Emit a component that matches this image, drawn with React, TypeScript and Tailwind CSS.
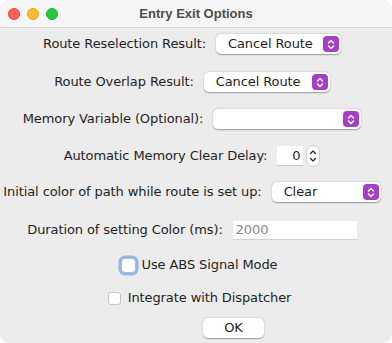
import React from "react";

const font = { fontFamily: '"Lucida Grande", "DejaVu Sans", sans-serif' };

function Chevrons({ className }: { className?: string }) {
  return (
    <svg width="8" height="11" viewBox="0 0 8 11" className={className}>
      <path d="M1.5 4 L4 1.5 L6.5 4" fill="none" stroke="currentColor" strokeWidth="1.5" strokeLinecap="round" strokeLinejoin="round" />
      <path d="M1.5 7 L4 9.5 L6.5 7" fill="none" stroke="currentColor" strokeWidth="1.5" strokeLinecap="round" strokeLinejoin="round" />
    </svg>
  );
}

function Select({ value, width }: { value: string; width: string }) {
  return (
    <div
      className={`${width} h-[20px] bg-white rounded-[5px] flex items-center justify-between pl-[12px] pr-[2px] shadow-[0_0.5px_1.5px_rgba(0,0,0,0.35)]`}
    >
      <span className="text-[13px] text-[#1f1f1f]">{value}</span>
      <div className="w-[16px] h-[16px] rounded-[4px] bg-[#a63fc8] flex items-center justify-center text-white">
        <Chevrons />
      </div>
    </div>
  );
}

export default function App() {
  return (
    <div className="w-[392px] h-[343px] bg-white" style={font}>
      <div className="w-[392px] h-[343px] rounded-[10px] overflow-hidden bg-[#ececec] flex flex-col">
        {/* title bar */}
        <div className="h-[28px] bg-[#f6f6f6] border-b border-[#d6d6d6] flex items-center relative">
          <div className="flex gap-[7px] pl-[8px]">
            <div className="w-[12px] h-[12px] rounded-full bg-[#fe5f57] border border-[#e2463f]" />
            <div className="w-[12px] h-[12px] rounded-full bg-[#febc2e] border border-[#e1a116]" />
            <div className="w-[12px] h-[12px] rounded-full bg-[#28c840] border border-[#1aab29]" />
          </div>
          <div className="absolute inset-0 flex items-center justify-center text-[13px] font-bold text-[#4d4d4d] font-['Liberation_Sans',sans-serif]">
            Entry Exit Options
          </div>
        </div>

        <div className="flex flex-col pr-[8px] text-[13px] text-[#1f1f1f] tracking-[-0.1px]">
          <div className="h-[20px] mt-[6px] flex items-center justify-center gap-[10px]">
            <span>Route Reselection Result:</span>
            <Select value="Cancel Route" width="w-[125px]" />
          </div>

          <div className="h-[20px] mt-[18px] flex items-center justify-center gap-[10px]">
            <span>Route Overlap Result:</span>
            <Select value="Cancel Route" width="w-[126px]" />
          </div>

          <div className="h-[20px] mt-[17px] flex items-center justify-center gap-[10px]">
            <span>Memory Variable (Optional):</span>
            <Select value="" width="w-[148px]" />
          </div>

          <div className="h-[20px] mt-[17px] flex items-center justify-center gap-[10px]">
            <span>Automatic Memory Clear Delay:</span>
            <div className="flex items-center gap-[3px]">
              <div className="w-[26px] h-[20px] bg-white border-b border-[#c8c8c8] flex items-center justify-end pr-[3px]">
                0
              </div>
              <div className="w-[14px] h-[22px] rounded-[7px] bg-white border border-[#cfcfcf] flex items-center justify-center text-[#333]">
                <svg width="8" height="16" viewBox="0 0 8 16">
                  <path d="M1.5 5.5 L4 3 L6.5 5.5" fill="none" stroke="currentColor" strokeWidth="1.4" strokeLinecap="round" strokeLinejoin="round" />
                  <path d="M1.5 10.5 L4 13 L6.5 10.5" fill="none" stroke="currentColor" strokeWidth="1.4" strokeLinecap="round" strokeLinejoin="round" />
                </svg>
              </div>
            </div>
          </div>

          <div className="h-[20px] mt-[16px] flex items-center justify-center gap-[10px]">
            <span>Initial color of path while route is set up:</span>
            <Select value="Clear" width="w-[109px]" />
          </div>

          <div className="h-[20px] mt-[18px] flex items-center justify-center gap-[10px]">
            <span>Duration of setting Color (ms):</span>
            <div className="w-[124px] h-[19px] bg-white border-b border-[#d0d0d0] flex items-center pl-[3px] text-[#8a8a8a]">
              2000
            </div>
          </div>

          <div className="h-[20px] mt-[15px] flex items-center justify-center gap-[6px] pl-[14px]">
            <div className="w-[15px] h-[15px] rounded-[4px] bg-white border border-[#b9b9b9] shadow-[0_0_0_2.5px_rgba(100,150,240,0.65)]" />
            <span>Use ABS Signal Mode</span>
          </div>

          <div className="h-[20px] mt-[13px] flex items-center justify-center gap-[7px] pl-[15px]">
            <div className="w-[13px] h-[13px] rounded-[3px] bg-white border border-[#c4c4c4]" />
            <span>Integrate with Dispatcher</span>
          </div>

          <div className="mt-[10px] pl-[203px]">
            <div className="w-[61px] h-[20px] bg-white rounded-[5px] flex items-center justify-center shadow-[0_0.5px_1.5px_rgba(0,0,0,0.35)]">
              OK
            </div>
          </div>
        </div>
      </div>
    </div>
  );
}
